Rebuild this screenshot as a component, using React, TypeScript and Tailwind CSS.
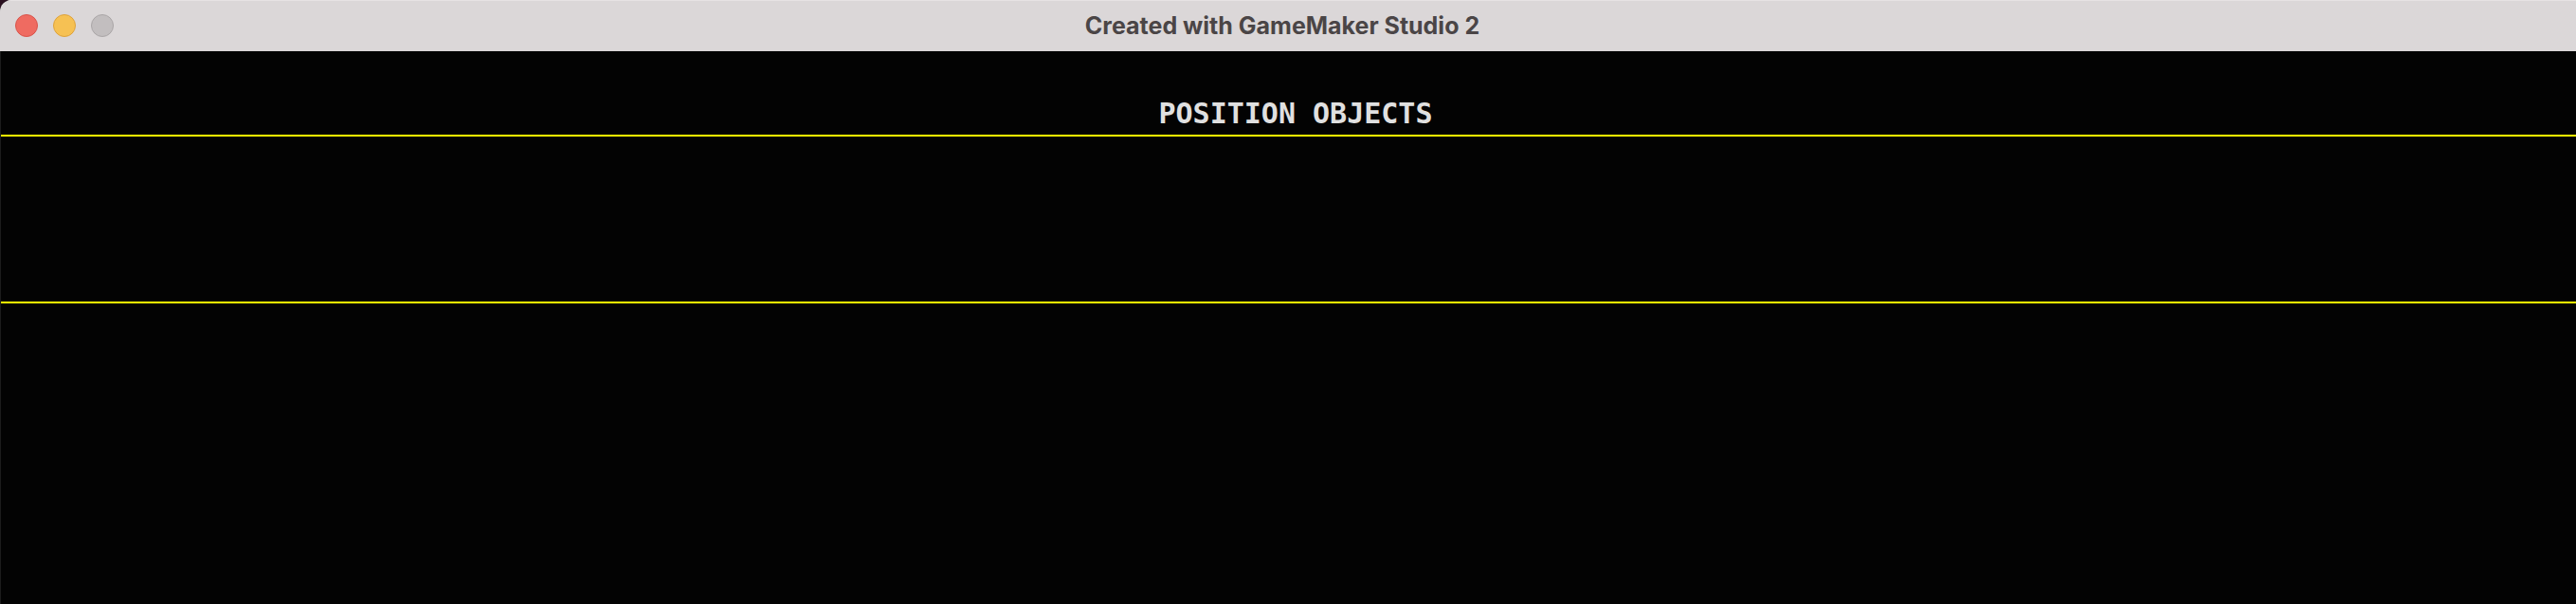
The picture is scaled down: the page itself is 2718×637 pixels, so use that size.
import React from "react";

export default function App() {
  return (
    <div className="w-[2718px] h-[637px] bg-[#2a1020] overflow-hidden">
      <div className="w-full h-full rounded-tl-[12px] overflow-hidden bg-[#030303] flex flex-col">
        <div className="h-[54px] shrink-0 bg-[#dbd7d8] border-t border-[#e6e2e3] relative flex items-center justify-center">
          <div className="absolute left-[16px] top-[14px] flex gap-[16px]">
            <div className="w-[24px] h-[24px] rounded-full bg-[#ef6b61] border border-[#d9544b]" />
            <div className="w-[24px] h-[24px] rounded-full bg-[#f6c153] border border-[#dea23b]" />
            <div className="w-[24px] h-[24px] rounded-full bg-[#c2bebf] border border-[#aaa6a7]" />
          </div>
          <div
            className="text-[25px] font-bold text-[#4a4546] leading-none pr-[12px]"
            style={{ fontFamily: "Inter, 'Liberation Sans', sans-serif" }}
          >
            Created with GameMaker Studio 2
          </div>
        </div>
        <div className="flex-1 border-l border-[#1c1c1c] flex flex-col">
          <div className="h-[88px] flex items-end justify-center pb-[7px]">
            <div
              className="text-[30px] leading-none font-bold text-[#e0e0e0] pl-[15px]"
              style={{ fontFamily: "'DejaVu Sans Mono', 'Liberation Mono', monospace" }}
            >
              POSITION OBJECTS
            </div>
          </div>
          <div className="h-[2px] bg-[#ffff00]" />
          <div className="h-[174px]" />
          <div className="h-[2px] bg-[#ffff00]" />
        </div>
      </div>
    </div>
  );
}
